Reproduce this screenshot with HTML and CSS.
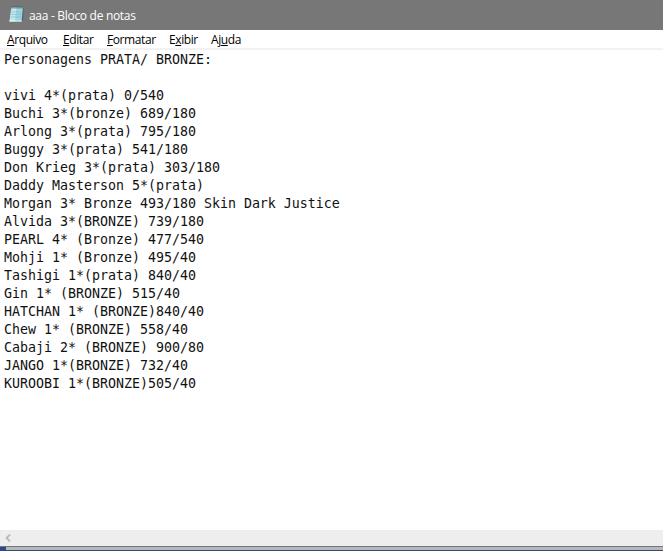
FILE: index.html
```html
<!DOCTYPE html>
<html lang="pt-BR">
<head>
    <meta charset="UTF-8">
    <title>aaa - Bloco de notas</title>
    <link rel="stylesheet" href="styles.css">
</head>
<body>
<div id="window">
    <div class="title-bar">
        <svg class="icon" width="16" height="18" viewBox="0 0 16 18">
            <path d="M13 2.500l2 1-1 12.500-3 .5z" fill="#53696f"/>
            <path d="M2.500 2h11.500L12.500 16.500H.5z" fill="#9fd3df"/>
            <path d="M2.500 2h5L6 16.500H.5z" fill="#c3e7ee"/>
            <path d="M2 7h10.500M1.800 9.500h10.500M1.500 12h10.500" stroke="#80b9c9" stroke-width=".6"/>
            <path d="M.5 16h12.500" stroke="#e5f3f5" stroke-width="1"/>
            <path d="M2.500 2.500h12" stroke="#304e5b" stroke-width="2" stroke-dasharray="1 1"/>
        </svg>
        <span class="title">aaa - Bloco de notas</span>
    </div>
    <ul class="menu">
        <li><u>A</u>rquivo</li>
        <li><u>E</u>ditar</li>
        <li><u>F</u>ormatar</li>
        <li>E<u>x</u>ibir</li>
        <li>Aj<u>u</u>da</li>
    </ul>
    <pre class="text">Personagens PRATA/ BRONZE:

vivi 4*(prata) 0/540
Buchi 3*(bronze) 689/180
Arlong 3*(prata) 795/180
Buggy 3*(prata) 541/180
Don Krieg 3*(prata) 303/180
Daddy Masterson 5*(prata)
Morgan 3* Bronze 493/180 Skin Dark Justice
Alvida 3*(BRONZE) 739/180
PEARL 4* (Bronze) 477/540
Mohji 1* (Bronze) 495/40
Tashigi 1*(prata) 840/40
Gin 1* (BRONZE) 515/40
HATCHAN 1* (BRONZE)840/40
Chew 1* (BRONZE) 558/40
Cabaji 2* (BRONZE) 900/80
JANGO 1*(BRONZE) 732/40
KUROOBI 1*(BRONZE)505/40</pre>
    <div class="scroll-bar">
        <svg width="6" height="8" viewBox="0 0 6 8">
            <path d="M5 .5L1.500 4 5 7.500" fill="none" stroke="#b8b8b8" stroke-width="1.800"/>
        </svg>
    </div>
    <div class="behind"><span></span></div>
</div>
</body>
</html>
```
FILE: styles.css
```css
* {
    margin: 0;
    padding: 0;
    box-sizing: border-box;
}

ul {
    list-style: none;
}

body {
    background-color: #fff;
    overflow: hidden;
}

#window {
    width: 663px;
    height: 551px;
    display: flex;
    flex-direction: column;
}

.title-bar {
    height: 30px;
    padding-left: 9px;
    display: flex;
    align-items: center;
    background-color: #777;
    color: #fff;
}

.icon {
    margin: 0 4px 2px 0;
}

.title {
    padding-top: 1px;
    font: 12px/17px "Open Sans", "Noto Sans", sans-serif;
    letter-spacing: -0.3px;
}

.menu {
    height: 20px;
    padding-left: 7px;
    display: grid;
    grid-template-columns: 56px 44px 62px 42px 60px;
    border-bottom: 2px solid #f2f2f2;
    font: 12px/20px "Open Sans", "Noto Sans", sans-serif;
    letter-spacing: -0.4px;
    color: #000;
}

.menu u {
    text-underline-offset: 1px;
    text-decoration-skip-ink: none;
}

.text {
    flex: 1;
    padding: 1px 0 0 4px;
    font: 13.29px/18px "DejaVu Sans Mono", monospace;
    color: #111;
}

.scroll-bar {
    height: 16px;
    padding: 4px 0 0 5px;
    background-color: #eee;
    line-height: 0;
}

.behind {
    height: 5px;
    border-top: 1px solid #777;
    border-bottom: 1px solid #3c4a66;
    background-color: #b4b8c0;
}

.behind span {
    display: block;
    width: 6px;
    height: 4px;
    background-color: #2d4a86;
}
```
